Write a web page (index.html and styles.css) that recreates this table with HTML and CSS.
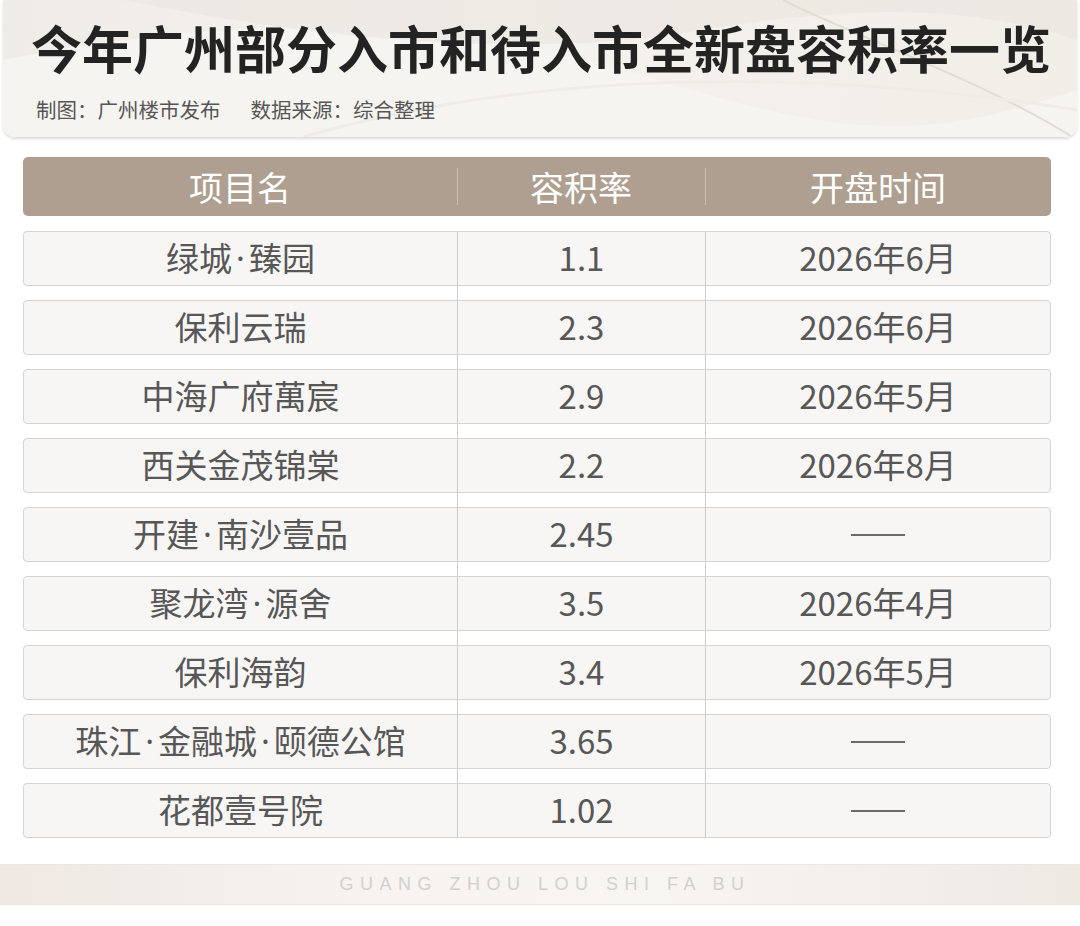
FILE: index.html
```html
<!DOCTYPE html>
<html lang="zh-CN">
<head>
<meta charset="utf-8">
<title>今年广州部分入市和待入市全新盘容积率一览</title>
<link rel="stylesheet" href="styles.css">
</head>
<body>
<header class="banner">
  <svg class="banner-deco" viewBox="0 0 1074 137" preserveAspectRatio="none" aria-hidden="true">
    <path d="M0 60 C 200 20, 420 10, 620 70 S 900 150, 1074 90 L 1074 137 L 0 137 Z" fill="#f6f4f0"/>
    <path d="M120 0 C 320 40, 520 60, 700 30 S 980 10, 1074 40 L 1074 0 Z" fill="#ebe6df" opacity="0.7"/>
    <path d="M780 0 C 860 40, 980 80, 1074 140" stroke="#e2dcd3" stroke-width="2" fill="none"/>
    <path d="M300 137 C 500 80, 760 60, 1074 110" stroke="#efebe5" stroke-width="3" fill="none"/>
  </svg>
  <h1 class="title">今年广州部分入市和待入市全新盘容积率一览</h1>
  <p class="subtitle"><span>制图：广州楼市发布</span><span>数据来源：综合整理</span></p>
</header>

<main class="table">
  <div class="thead">
    <div class="th">项目名</div>
    <div class="th">容积率</div>
    <div class="th">开盘时间</div>
  </div>
  <div class="tbody">
    <div class="tr"><div class="td">绿城<span class="dot">·</span>臻园</div><div class="td">1.1</div><div class="td">2026年6月</div></div>
    <div class="tr"><div class="td">保利云瑞</div><div class="td">2.3</div><div class="td">2026年6月</div></div>
    <div class="tr"><div class="td">中海广府萬宸</div><div class="td">2.9</div><div class="td">2026年5月</div></div>
    <div class="tr"><div class="td">西关金茂锦棠</div><div class="td">2.2</div><div class="td">2026年8月</div></div>
    <div class="tr"><div class="td">开建<span class="dot">·</span>南沙壹品</div><div class="td">2.45</div><div class="td"><span class="dash"></span></div></div>
    <div class="tr"><div class="td">聚龙湾<span class="dot">·</span>源舍</div><div class="td">3.5</div><div class="td">2026年4月</div></div>
    <div class="tr"><div class="td">保利海韵</div><div class="td">3.4</div><div class="td">2026年5月</div></div>
    <div class="tr"><div class="td">珠江<span class="dot">·</span>金融城<span class="dot">·</span>颐德公馆</div><div class="td">3.65</div><div class="td"><span class="dash"></span></div></div>
    <div class="tr"><div class="td">花都壹号院</div><div class="td">1.02</div><div class="td"><span class="dash"></span></div></div>
  </div>
</main>

<footer class="footer">GUANG ZHOU LOU SHI FA BU</footer>
</body>
</html>
```

FILE: styles.css
```css
* { box-sizing: border-box; }

html, body {
  margin: 0;
  padding: 0;
  background: #ffffff;
}

body {
  font-family: "Noto Sans CJK SC", "Noto Sans", sans-serif;
  color: #575757;
  width: 1080px;
}

.banner {
  position: relative;
  margin: 0 3px;
  height: 137px;
  overflow: hidden;
  background: linear-gradient(100deg, #efece7 0%, #f5f3ef 45%, #f1ede7 100%);
  border-radius: 0 0 12px 12px;
  box-shadow: 0 2px 3px rgba(0, 0, 0, 0.14);
  padding: 17px 0 0 28px;
}

.banner-deco {
  position: absolute;
  left: 0;
  top: 0;
  width: 100%;
  height: 100%;
  z-index: 0;
}

.title {
  position: relative;
  z-index: 1;
  margin: 0;
  font-size: 51px;
  line-height: 60px;
  font-weight: 700;
  color: #232323;
  letter-spacing: 0;
  white-space: nowrap;
}

.subtitle {
  position: relative;
  z-index: 1;
  margin: 19px 0 0 5px;
  font-size: 20.5px;
  line-height: 26px;
  color: #565656;
  display: flex;
  gap: 30px;
}

.table {
  margin: 20px 0 0 23px;
  width: 1028px;
}

.thead {
  display: grid;
  grid-template-columns: 434px 248px 1fr;
  height: 59px;
  background: #ae9f90;
  border-radius: 5px;
}

.th {
  position: relative;
  display: flex;
  align-items: center;
  justify-content: center;
  font-size: 34px;
  color: #ffffff;
  font-weight: 400;
}

.th + .th::before {
  content: "";
  position: absolute;
  left: 0;
  top: 11px;
  bottom: 11px;
  width: 1px;
  background: rgba(255, 255, 255, 0.35);
}

.tbody {
  margin-top: 15px;
  display: flex;
  flex-direction: column;
  gap: 14px;
  background:
    linear-gradient(to right, transparent 434px, #cbcbcb 434px, #cbcbcb 435px, transparent 435px),
    linear-gradient(to right, transparent 682px, #cbcbcb 682px, #cbcbcb 683px, transparent 683px);
}

.tr {
  display: grid;
  grid-template-columns: 433px 248px 1fr;
  height: 55px;
  background: #f7f6f4;
  border: 1px solid #d4d4d4;
  border-radius: 4px;
}

.td {
  display: flex;
  align-items: center;
  justify-content: center;
  font-size: 33px;
  color: #575757;
  padding-bottom: 3px;
}

.td + .td {
  border-left: 1px solid #cbcbcb;
}

.dot {
  font-family: "Noto Sans", sans-serif;
  padding: 0 4px;
}

.dash {
  display: block;
  width: 54px;
  height: 2px;
  background: #6a6a6a;
  margin-top: 3px;
}

.footer {
  margin-top: 26px;
  height: 41px;
  display: flex;
  align-items: center;
  justify-content: center;
  padding-left: 10px;
  font-family: "Liberation Sans", Arial, sans-serif;
  font-size: 18px;
  letter-spacing: 6.5px;
  color: #d3cfcb;
  border-top: 1px solid #ebe6e1;
  border-bottom: 1px solid #ebe6e1;
  background: linear-gradient(to right, #efe8e3 0%, #f6f3f0 35%, #f7f5f2 60%, #efe9e4 100%);
}
```
